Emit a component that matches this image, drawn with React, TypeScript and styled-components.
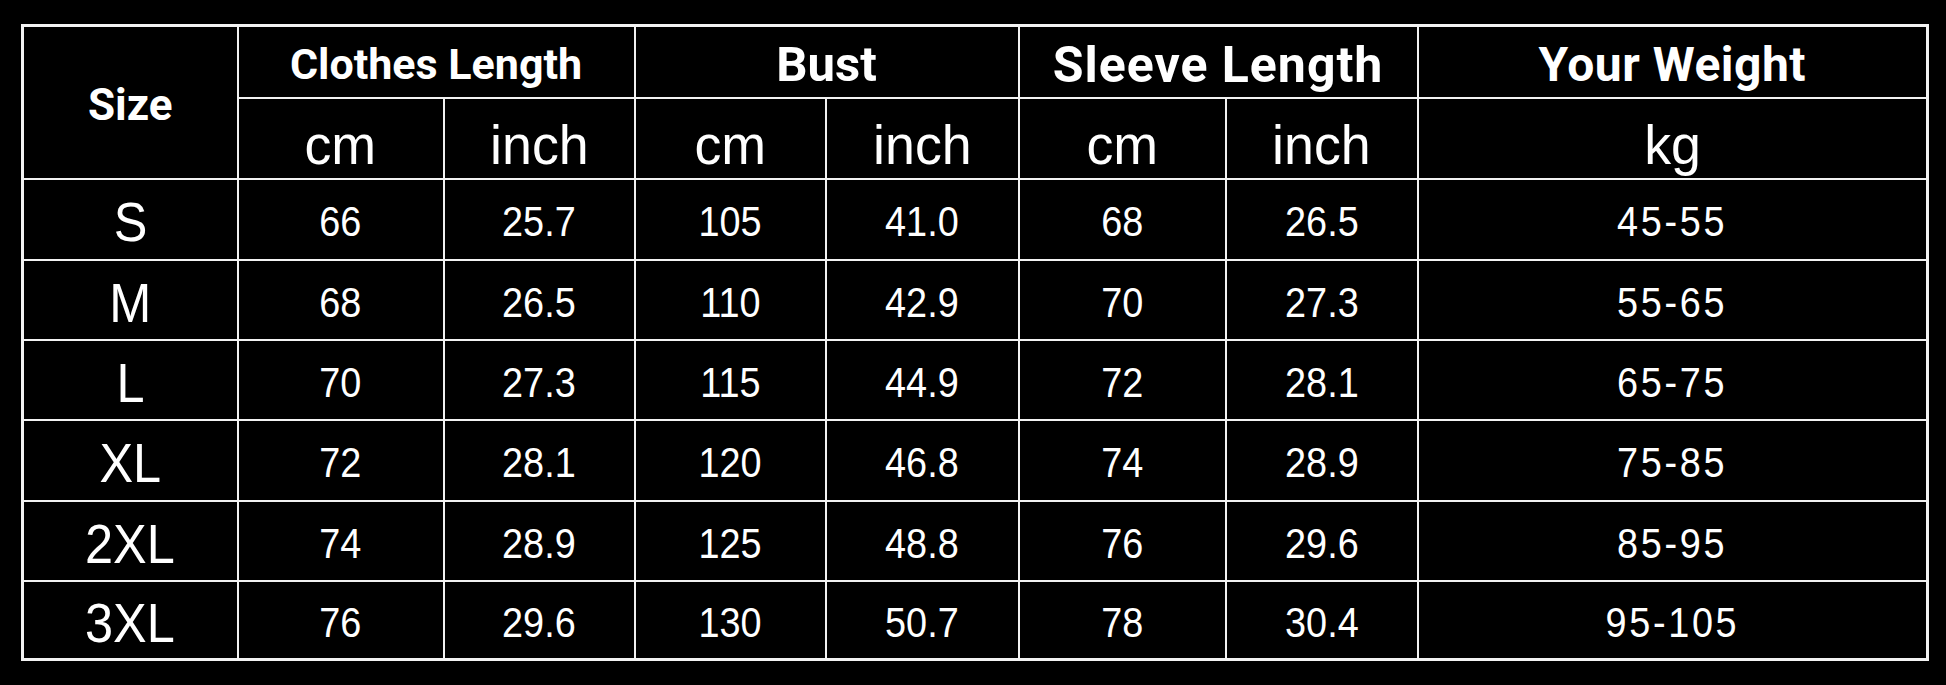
import React from "react";
import styled, { createGlobalStyle } from "styled-components";

const GlobalStyle = createGlobalStyle`
  html, body {
    margin: 0;
    padding: 0;
    background: #000;
  }
  body {
    width: 1946px;
    height: 685px;
    overflow: hidden;
  }
`;

const Page = styled.div`
  padding: 24px 0 0 21px;
  background: #000;
  height: 685px;
  box-sizing: border-box;
`;

const Table = styled.table`
  width: 1905px;
  border-collapse: collapse;
  table-layout: fixed;
  border: 3px solid #f2f2f2;
  color: #fff;
  font-family: "Liberation Sans", Arial, sans-serif;
`;

const Cell = styled.td<{ $h?: number }>`
  border: 2px solid #f2f2f2;
  padding: 0;
  text-align: center;
  vertical-align: middle;
  height: ${(p) => p.$h ?? 80}px;
  box-sizing: border-box;
  white-space: nowrap;
`;

const Title = styled.span<{ $size: number; $spacing?: number }>`
  display: inline-block;
  font-family: Roboto, "Liberation Sans", sans-serif;
  font-weight: 700;
  font-size: ${(p) => p.$size}px;
  letter-spacing: ${(p) => p.$spacing ?? 0}px;
  line-height: 1;
  padding-top: 6px;
`;

const Unit = styled.span`
  display: inline-block;
  font-size: 56px;
  line-height: 1;
  padding-top: 14px;
  transform: scaleX(0.96);
`;

const SizeLabel = styled.span`
  display: inline-block;
  font-size: 56px;
  line-height: 1;
  padding-top: 6px;
  transform: scaleX(0.9);
`;

const Value = styled.span<{ $wide?: boolean }>`
  display: inline-block;
  font-size: 42px;
  line-height: 1;
  letter-spacing: ${(p) => (p.$wide ? 3 : 0)}px;
  padding-top: 6px;
  transform: scaleX(0.9);
`;

const widths = [215, 206, 191, 191, 193, 207, 192, 510];

const rows = [
  ["S", "66", "25.7", "105", "41.0", "68", "26.5", "45-55"],
  ["M", "68", "26.5", "110", "42.9", "70", "27.3", "55-65"],
  ["L", "70", "27.3", "115", "44.9", "72", "28.1", "65-75"],
  ["XL", "72", "28.1", "120", "46.8", "74", "28.9", "75-85"],
  ["2XL", "74", "28.9", "125", "48.8", "76", "29.6", "85-95"],
  ["3XL", "76", "29.6", "130", "50.7", "78", "30.4", "95-105"],
];

const rowHeights = [81, 80, 80, 81, 80, 79];

export default function App() {
  return (
    <>
      <GlobalStyle />
      <Page>
        <Table>
          <colgroup>
            {widths.map((w, i) => (
              <col key={i} style={{ width: w }} />
            ))}
          </colgroup>
          <thead>
            <tr>
              <Cell as="th" rowSpan={2} $h={72}>
                <Title $size={44}>Size</Title>
              </Cell>
              <Cell as="th" colSpan={2} $h={72}>
                <Title $size={43}>Clothes Length</Title>
              </Cell>
              <Cell as="th" colSpan={2} $h={72}>
                <Title $size={49}>Bust</Title>
              </Cell>
              <Cell as="th" colSpan={2} $h={72}>
                <Title $size={50} $spacing={1}>Sleeve Length</Title>
              </Cell>
              <Cell as="th" $h={72}>
                <Title $size={48} $spacing={0.5}>Your Weight</Title>
              </Cell>
            </tr>
            <tr>
              <Cell $h={81}><Unit>cm</Unit></Cell>
              <Cell $h={81}><Unit>inch</Unit></Cell>
              <Cell $h={81}><Unit>cm</Unit></Cell>
              <Cell $h={81}><Unit>inch</Unit></Cell>
              <Cell $h={81}><Unit>cm</Unit></Cell>
              <Cell $h={81}><Unit>inch</Unit></Cell>
              <Cell $h={81}><Unit>kg</Unit></Cell>
            </tr>
          </thead>
          <tbody>
            {rows.map((r, ri) => (
              <tr key={r[0]}>
                {r.map((v, ci) => (
                  <Cell key={ci} $h={rowHeights[ri]}>
                    {ci === 0 ? (
                      <SizeLabel>{v}</SizeLabel>
                    ) : (
                      <Value $wide={ci === 7}>{v}</Value>
                    )}
                  </Cell>
                ))}
              </tr>
            ))}
          </tbody>
        </Table>
      </Page>
    </>
  );
}
